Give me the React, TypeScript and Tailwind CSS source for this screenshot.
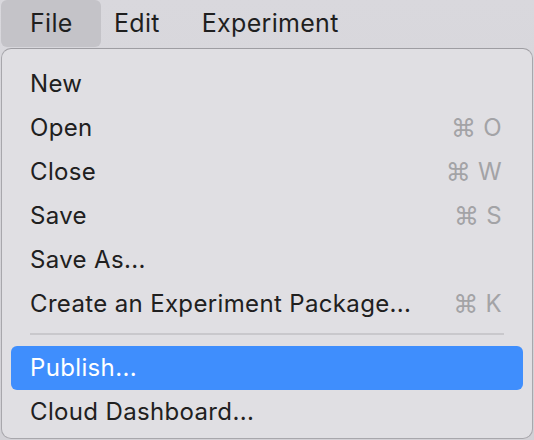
import React from "react";

type Item = { label: string; key?: string };

const groupA: Item[] = [
  { label: "New" },
  { label: "Open", key: "O" },
  { label: "Close", key: "W" },
  { label: "Save", key: "S" },
  { label: "Save As..." },
  { label: "Create an Experiment Package...", key: "K" },
];

function Row({ item, active }: { item: Item; active?: boolean }) {
  return (
    <div
      className={
        "mx-[9px] h-[44px] flex items-center justify-between pl-[19px] pr-[21px] rounded-[6px] " +
        (active ? "bg-[#3f8efd] text-white" : "text-[#202020]")
      }
    >
      <span>{item.label}</span>
      {item.key && (
        <span className="flex items-center gap-[7px] text-[#a3a3a6]">
          <span className="text-[25px] leading-none font-['DejaVu_Sans',sans-serif]">⌘</span>
          <span>{item.key}</span>
        </span>
      )}
    </div>
  );
}

export default function App() {
  return (
    <div className="w-[534px] h-[440px] overflow-hidden bg-gradient-to-b from-[#d9d8dd] to-[#d2d1d6] font-['Inter','Liberation_Sans',sans-serif] antialiased">
      <div className="h-[47px] flex items-stretch pl-[1px] text-[25px] tracking-[0.3px] text-[#1f1f1f]">
        <div className="w-[100px] rounded-[6px] bg-[#c4c3c8] flex items-center pl-[29px]">File</div>
        <div className="flex items-center pl-[13px]">Edit</div>
        <div className="flex items-center pl-[42px]">Experiment</div>
      </div>
      <div className="ml-[1px] w-[532px] h-[391px] mt-[1px] rounded-[10px] bg-[#e0dfe3] border border-[#a8a7ac] border-t-[#9e9da2] pt-[13px] text-[24px] tracking-[0.35px]">
        {groupA.map((it) => (
          <Row key={it.label} item={it} />
        ))}
        <div className="h-[20px] flex items-start pt-[7px] px-[28px]">
          <div className="h-[2px] w-full bg-[#c9c8cc]" />
        </div>
        <Row item={{ label: "Publish..." }} active />
        <Row item={{ label: "Cloud Dashboard..." }} />
      </div>
    </div>
  );
}
